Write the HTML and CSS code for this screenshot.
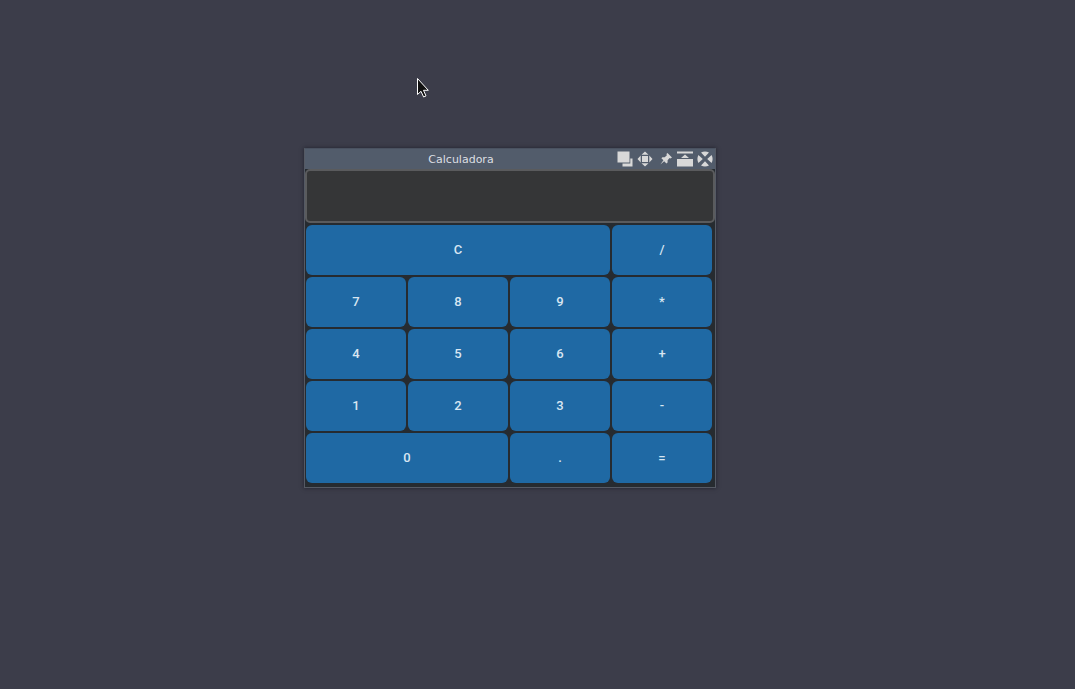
FILE: index.html
```html
<!DOCTYPE html>
<html lang="pt">
<head>
<meta charset="utf-8">
<title>Calculadora</title>
<link rel="stylesheet" href="styles.css">
</head>
<body class="desktop">
<svg class="cursor" width="14" height="22" viewBox="0 0 14 22" aria-hidden="true"><path d="M1.5 1.5V17.5L5 14.3L7.6 20L10 18.9L7.5 13.3H12.3Z" fill="#111" stroke="#fff" stroke-width="1"/></svg>
<main class="window">
  <header class="titlebar">
    <h1 class="title">Calculadora</h1>
    <div class="controls">
      <button class="control" aria-label="Mudar de área"><svg viewBox="0 0 16 16"><path d="M.5 .5H12.5V11.5H.5Z"/><path d="M13.3 7.5H15.5V15.5H5.5V12.5H13.3Z"/></svg></button>
      <button class="control" aria-label="Mover"><svg viewBox="0 0 16 16"><path d="M5 5H11V11H5Z"/><path d="M4.5 3.7L8 .5L11.5 3.7ZM4.5 12.3L8 15.5L11.5 12.3ZM3.7 4.5L.5 8L3.7 11.5ZM12.3 4.5L15.5 8L12.3 11.5Z"/></svg></button>
      <button class="control" aria-label="Fixar"><svg viewBox="0 0 16 16"><path d="M10.5 2L15 6.5L13.4 7.5L12.6 7L10.6 9.2L10.6 11.5L9.4 12.5L7.2 10.2L3.4 13.5L6.4 9.3L4.4 7.2L5.4 6.2L7.7 6.2L9.9 4.2L9.4 3Z"/></svg></button>
      <button class="control" aria-label="Enrolar"><svg viewBox="0 0 16 16"><path d="M0 .5H16V2.5H0ZM0 8H16V15.5H0ZM4 7L8 3.5L12 7Z"/></svg></button>
      <button class="control" aria-label="Fechar"><svg viewBox="0 0 16 16"><path d="M4 1.4Q8-.6 12 1.4L8 5.8ZM4 14.6Q8 16.6 12 14.6L8 10.2ZM1.4 4Q-.6 8 1.4 12L5.8 8ZM14.6 4Q16.6 8 14.6 12L10.2 8Z"/></svg></button>
    </div>
  </header>
  <input class="display" type="text" aria-label="Visor">
  <div class="keys">
    <button class="key span-3">C</button><button class="key">/</button>
    <button class="key">7</button><button class="key">8</button><button class="key">9</button><button class="key">*</button>
    <button class="key">4</button><button class="key">5</button><button class="key">6</button><button class="key">+</button>
    <button class="key">1</button><button class="key">2</button><button class="key">3</button><button class="key">-</button>
    <button class="key span-2">0</button><button class="key">.</button><button class="key">=</button>
  </div>
</main>
</body>
</html>
```
FILE: styles.css
```css
* { box-sizing: border-box; }

.desktop {
  margin: 0;
  min-height: 100vh;
  position: relative;
  background: #3c3d4a;
}

.cursor {
  position: absolute;
  left: 416px;
  top: 77px;
}

.window {
  position: absolute;
  left: 304px;
  top: 148px;
  width: 412px;
  border: 1px solid #555a64;
  border-top-color: #4a5260;
  background: #262b30;
  box-shadow: 0 0 4px rgba(15, 15, 25, 0.6);
}

.titlebar {
  display: flex;
  align-items: center;
  height: 20px;
  padding-right: 2px;
  background: #525c6b;
}

.title {
  flex: 1;
  margin: 0;
  padding-top: 2px;
  font: 11px/18px "DejaVu Sans", sans-serif;
  color: #dcdfe4;
  text-align: center;
}

.controls {
  display: flex;
  gap: 4px;
}

.control {
  width: 16px;
  height: 16px;
  padding: 0;
  border: 0;
  background: none;
}

.control svg {
  display: block;
  fill: #d8d8d8;
}

.display {
  display: block;
  width: 100%;
  height: 54px;
  padding: 0 8px;
  border: 2px solid #5a5b5d;
  border-radius: 5px;
  outline: 0;
  background: #353637;
  color: #e4e7eb;
  font: 500 20px Roboto, sans-serif;
}

.keys {
  display: grid;
  grid-template-columns: repeat(4, 1fr);
  grid-auto-rows: 50px;
  gap: 2px;
  padding: 2px 3px 4px 1px;
}

.key {
  padding: 0 0 1px;
  border: 0;
  border-radius: 6px;
  background: #1f69a4;
  color: #d8e6f2;
  font: 500 13px Roboto, sans-serif;
}

.span-2 { grid-column: span 2; }
.span-3 { grid-column: span 3; }
```
